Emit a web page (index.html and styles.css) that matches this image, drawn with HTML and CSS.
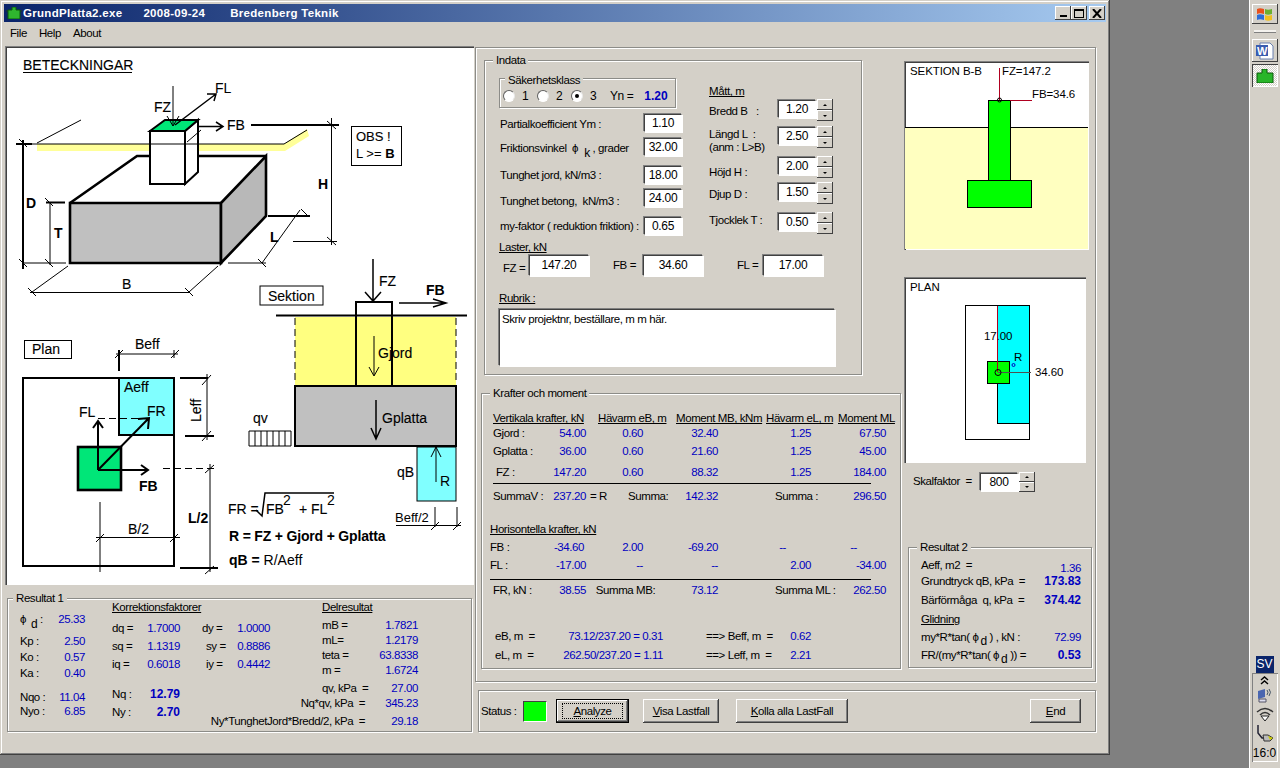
FILE: index.html
```html
<!DOCTYPE html>
<html lang="sv">
<head>
<meta charset="utf-8">
<title>GrundPlatta2.exe</title>
<link rel="stylesheet" href="styles.css">
</head>
<body>
<div class="desktop">
<div class="window">
  <div class="titlebar">
    <svg class="appicon" width="16" height="12" viewBox="0 0 16 12"><path d="M0 4h3M13 4h3" stroke="#1c3c1c" fill="none"/><path d="M6 0h4v3h4v9H2V3h4z" fill="#2fb52f" stroke="#0b5a0b"/></svg>
    <span class="ttext">GrundPlatta2.exe</span><span class="ttext">2008-09-24</span><span class="ttext tlast">Bredenberg Teknik</span>
    <div class="wbtns">
      <div class="wbtn"><i class="wmin"></i></div>
      <div class="wbtn"><i class="wmax"></i></div>
      <div class="wbtn wclose"><svg width="10" height="9" viewBox="0 0 10 9"><path d="M1 0l8 9M9 0L1 9" stroke="#000" stroke-width="2" fill="none"/></svg></div>
    </div>
  </div>
  <div class="menubar"><span>File</span><span>Help</span><span>About</span></div>
  <div class="client">
    <div class="leftcol">
      <div class="drawing">
        <svg width="469" height="539" viewBox="5 46 469 539" class="dsvg">
          <text x="23" y="70" class="sb tx big">BETECKNINGAR</text><path d="M23 72.5H132" class="s1"/>
          <!-- yellow ground band -->
          <path d="M37 144H284L307 129L309 136L285 151H37Z" fill="#ffff99"/>
          <path d="M16 144H284L307 130M37 143L81 120" class="s1"/>
          <path d="M16 144H32" class="s2"/>
          <path d="M23 140V269" class="s2"/>
          <path d="M19 139l8 8M19 259l8 8M45 198l8 8M45 259l8 8" class="s1"/>
          <path d="M23 263H66M50 202V265M46 202.5H65" class="s1"/>
          <path d="M46 202.5H65" class="s2"/>
          <!-- block -->
          <path d="M70 203H221V263H70Z" fill="#c0c0c0" class="s3"/>
          <path d="M221 203L266 156V216L221 263Z" fill="#b8b8b8" class="s3"/>
          <path d="M70 203L137 156H150M198 156H266" class="s3n"/>
          <!-- column -->
          <path d="M150 131H185V184H150Z" fill="#fff" class="s2"/>
          <path d="M185 131L198 120V172L185 184Z" fill="#fff" class="s2"/>
          <path d="M150 131L165 120H198L185 131Z" fill="#00e678" class="s2"/>
          <path d="M150 144H198M187 142L201 130" class="s1"/>
          <!-- arrows -->
          <path d="M173 86V126M167 116L173 126L179 116" class="s1"/>
          <path d="M175 125L216 94M207 94L216 94L214 101" class="s15"/>
          <path d="M198 126.5H223M216 122L223 126.5L216 131" class="s15"/>
          <text x="154" y="112" class="tx sb">FZ</text>
          <text x="215" y="93" class="tx">FL</text>
          <text x="227" y="130" class="tx sb">FB</text>
          <path d="M251 125H339" class="s2"/>
          <path d="M331.5 118V245M293 241.5H337M327 121l9 8M327 237l9 8" class="s1"/>
          <text x="318" y="189" class="tx bd">H</text>
          <rect x="351.500" y="126.500" width="50" height="39" fill="#fff" class="s1"/>
          <text x="356" y="141" class="tx sb small13">OBS !</text>
          <text x="356" y="158" class="tx small13">L &gt;= <tspan class="bd">B</tspan></text>
          <text x="26" y="208" class="tx bd">D</text>
          <text x="54" y="238" class="tx bd">T</text>
          <text x="270" y="242" class="tx bd">L</text>
          <path d="M262 263L300 210M268 216H310" class="s1"/>
          <path d="M268 216H310" class="s2"/>
          <path d="M228 263H266M258 259l8 8M301 209l8 8" class="s1"/>
          <text x="122" y="289" class="tx sb">B</text>
          <path d="M30 292.500H190M32 292L68 266M189 292L218 266M28 288l8 8M185 288l8 8" class="s1"/>
          <!-- Sektion -->
          <rect x="260" y="286" width="63" height="19" fill="#fff" class="s1"/>
          <text x="268" y="301" class="tx sb">Sektion</text>
          <rect x="295" y="317" width="161" height="69" fill="#ffff80"/>
          <path d="M295 318V384M456 318V384" class="dash"/>
          <path d="M276 315.500H467" class="s2"/>
          <path d="M356 385V302H392V385" class="s2" fill="none"/>
          <path d="M373 259V301M365 292L373 301L381 292" class="s15"/>
          <text x="379" y="286" class="tx sb">FZ</text>
          <text x="426" y="295" class="tx bd">FB</text>
          <path d="M399 303H446M433 299L446 303L433 307" class="s15"/>
          <path d="M374 336V375M369 367L374 376L379 367" class="s1"/>
          <text x="378" y="358" class="tx sb">Gjord</text>
          <rect x="295" y="386" width="161" height="60" fill="#c0c0c0" class="s2"/>
          <path d="M376 400V438M371 428L376 439L381 428" class="s15"/>
          <text x="382" y="423" class="tx sb">Gplatta</text>
          <text x="253" y="423" class="tx sb">qv</text>
          <path d="M249 431H291V446H249ZM255 431V446M261 431V446M267 431V446M273 431V446M279 431V446M285 431V446" class="s1" fill="#fff"/>
          <rect x="417" y="447" width="39" height="54" fill="#80ffff" class="s1"/>
          <path d="M436 482V447M431 457L436 447L441 457" class="s1"/>
          <text x="440" y="486" class="tx">R</text>
          <text x="397" y="477" class="tx sb">qB</text>
          <text x="395" y="522" class="tx small13">Beff/2</text>
          <path d="M396 525.500H461M435 507V527M457 507V527M431 530l8-8M453 530l8-8" class="s1"/>
          <!-- Plan -->
          <rect x="24.500" y="340.500" width="47" height="18" fill="#fff" class="s1"/>
          <text x="32" y="354" class="tx sb">Plan</text>
          <text x="135" y="349" class="tx sb">Beff</text>
          <path d="M116 354H178M115 358l8-8M171 358l8-8M174 350V358" class="s1"/>
          <path d="M119 350V371" class="s2"/>
          <rect x="23" y="378" width="151" height="188" fill="#fff" class="s2"/>
          <rect x="119" y="378" width="55" height="57" fill="#80ffff" class="s2"/>
          <text x="124" y="392" class="tx sb">Aeff</text>
          <text x="147" y="416" class="tx sb">FR</text>
          <text x="79" y="417" class="tx sb">FL</text>
          <rect x="78" y="447" width="43" height="43" fill="#00e678" class="s3"/>
          <path d="M98 470L149 418M138 419L149 418L148 429M98 470V421M93 428L98 421L103 428M98 470H148M141 465L148 470L141 475" class="s2"/>
          <path d="M98 418.500H148" class="dash"/>
          <text x="139" y="491" class="tx bd">FB</text>
          <text transform="translate(201 422) rotate(-90)" class="tx sb">Leff</text>
          <path d="M207 374V440M202 385l9-10M202 441l9-10" class="s1"/>
          <path d="M180 378H208M185 436H214" class="s2"/>
          <text x="188" y="523" class="tx bd">L/2</text>
          <path d="M163 468.500H215" class="dash"/>
          <path d="M210 464V572M205 473l9-8M205 574l9-8" class="s1"/>
          <path d="M180 568H218" class="s2"/>
          <text x="128" y="534" class="tx sb">B/2</text>
          <path d="M96 537.500H180M100 502V572M96 542l8-8M170 542l8-8" class="s1"/>
          <!-- formulas -->
          <text x="228" y="514" class="tx sb">FR =</text>
          <path d="M256 510L262 516L265 493H334" class="s15"/>
          <text x="266" y="514" class="tx sb">FB</text>
          <text x="283" y="505" class="tx">2</text>
          <text x="299" y="514" class="tx sb">+ FL</text>
          <text x="327" y="505" class="tx">2</text>
          <text x="229" y="541" class="tx bd tight">R = FZ + Gjord + Gplatta</text>
          <text x="229" y="565" class="tx"><tspan class="bd">qB =</tspan> R/Aeff</text>
        </svg>
      </div>
      <div class="frame res1">
        <div class="legend leg1">Resultat 1</div>
        <div class="r1body">
          <div class="r1a">
            <div class="lv"><span>&#981;<sub class="subd">d</sub> :</span><b class="v">25.33</b></div>
            <div class="lv"><span>Kp :</span><b class="v">2.50</b></div>
            <div class="lv"><span>Ko :</span><b class="v">0.57</b></div>
            <div class="lv"><span>Ka :</span><b class="v">0.40</b></div>
            <div class="lv"><span>Nqo :</span><b class="v">11.04</b></div>
            <div class="lv"><span>Nyo :</span><b class="v">6.85</b></div>
          </div>
          <div class="r1b">
            <div class="u span2">Korrektionsfaktorer</div>
            <div class="lv"><span>dq =</span><b class="v">1.7000</b></div><div class="lv p22"><span>dy =</span><b class="v">1.0000</b></div>
            <div class="lv"><span>sq =</span><b class="v">1.1319</b></div><div class="lv p26"><span>sy =</span><b class="v">0.8886</b></div>
            <div class="lv"><span>iq =</span><b class="v">0.6018</b></div><div class="lv p26"><span>iy =</span><b class="v">0.4442</b></div>
            <div class="lv"><span>Nq :</span><b class="v strong">12.79</b></div><div></div>
            <div class="lv"><span>Ny :</span><b class="v strong">2.70</b></div><div></div>
          </div>
          <div class="r1c">
            <div class="u span2">Delresultat</div>
            <div>mB =</div><b class="v ra">1.7821</b>
            <div>mL=</div><b class="v ra">1.2179</b>
            <div>teta =</div><b class="v ra">63.8338</b>
            <div>m =</div><b class="v ra">1.6724</b>
            <div class="nw">qv, kPa &nbsp;=</div><b class="v ra">27.00</b>
            <div class="lab-end">Nq*qv, kPa &nbsp;=</div><b class="v ra">345.23</b>
            <div class="lab-end">Ny*TunghetJord*Bredd/2, kPa &nbsp;=</div><b class="v ra">29.18</b>
          </div>
        </div>
      </div>
    </div>
    <div class="rightcol">
      <div class="frame mainframe">
        <div class="mleft">
          <div class="frame indata">
            <div class="legend">Indata</div>
            <div class="indbody">
              <div class="indl">
                <div class="frame klass">
                  <div class="legend leg2">Säkerhetsklass</div>
                  <div class="radios">
                    <i class="radio"></i><span class="rl">1</span>
                    <i class="radio"></i><span class="rl">2</span>
                    <i class="radio on"></i><span class="rl">3</span>
                    <span class="yn">Yn =</span><b class="v strong ynv">1.20</b>
                  </div>
                </div>
                <div class="lrow h24 first"><span class="m3">Partialkoefficient Ym :</span><div class="field f38">1.10</div></div>
                <div class="lrow h28"><span class="m3">Friktionsvinkel &nbsp;&#981;<sub class="subk">k</sub> , grader</span><div class="field f38">32.00</div></div>
                <div class="lrow h23"><span class="m2">Tunghet jord, kN/m3 :</span><div class="field f38">18.00</div></div>
                <div class="lrow h28"><span class="m5">Tunghet betong, &nbsp;kN/m3 :</span><div class="field f38">24.00</div></div>
                <div class="lrow h22"><span class="m2">my-faktor ( reduktion friktion) :</span><div class="field f38">0.65</div></div>
              </div>
              <div class="indr">
                <div class="u matt">Mått, m</div>
                <div class="rrow h27"><span class="rlab m5">Bredd B &nbsp;&nbsp;:</span><div class="field f38">1.20</div><div class="spin"><i><s class="up"></s></i><i><s class="dn"></s></i></div></div>
                <div class="rrow h30"><span class="rlab m1">Längd L &nbsp;:<br>(anm : L&gt;B)</span><div class="field f38">2.50</div><div class="spin"><i><s class="up"></s></i><i><s class="dn"></s></i></div></div>
                <div class="rrow h26"><span class="rlab m9">Höjd H :</span><div class="field f38">2.00</div><div class="spin"><i><s class="up"></s></i><i><s class="dn"></s></i></div></div>
                <div class="rrow h30"><span class="rlab m5">Djup D :</span><div class="field f38">1.50</div><div class="spin"><i><s class="up"></s></i><i><s class="dn"></s></i></div></div>
                <div class="rrow h22"><span class="rlab m1">Tjocklek T :</span><div class="field f38">0.50</div><div class="spin"><i><s class="up"></s></i><i><s class="dn"></s></i></div></div>
              </div>
            </div>
            <div class="u laster">Laster, kN</div>
            <div class="lastrow">
              <span class="lfz">FZ =</span><div class="field fw">147.20</div>
              <span class="lfb">FB =</span><div class="field fw">34.60</div>
              <span class="lfl">FL =</span><div class="field fw">17.00</div>
            </div>
            <div class="u rubrik">Rubrik :</div>
            <div class="tarea">Skriv projektnr, beställare, m m här.</div>
          </div>
          <div class="frame krafter">
            <div class="legend">Krafter och moment</div>
            <div class="ktable">
              <div class="u h1">Vertikala krafter, kN</div><div class="u h2">Hävarm eB, m</div><div class="u h3">Moment MB, kNm</div><div class="u h4">Hävarm eL, m</div><div class="u h5">Moment ML</div>
              <div class="lv pl3"><span>Gjord :</span><b class="v">54.00</b></div><b class="v ra">0.60</b><b class="v ra">32.40</b><b class="v ra">1.25</b><b class="v ra">67.50</b>
              <div class="lv pl3"><span>Gplatta :</span><b class="v">36.00</b></div><b class="v ra">0.60</b><b class="v ra">21.60</b><b class="v ra">1.25</b><b class="v ra">45.00</b>
              <div class="lv pl6"><span>FZ :</span><b class="v">147.20</b></div><b class="v ra">0.60</b><b class="v ra">88.32</b><b class="v ra">1.25</b><b class="v ra">184.00</b>
              <div class="rule rl3"></div>
              <div class="lv pl3"><span>SummaV :</span><b class="v">237.20</b></div>
              <div class="sumspan"><span class="eqr">= R</span><span class="sml">Summa:</span><b class="v">142.32</b></div>
              <div class="pl57 nw">Summa :</div><b class="v ra">296.50</b>
              <div class="u hz">Horisontella krafter, kN</div>
              <div class="lv"><span>FB :</span><b class="v pr2">-34.60</b></div><b class="v ra">2.00</b><b class="v ra">-69.20</b><b class="v ra pr25">--</b><b class="v ra pr29">--</b>
              <div class="lv"><span>FL :</span><b class="v">-17.00</b></div><b class="v ra">--</b><b class="v ra">--</b><b class="v ra">2.00</b><b class="v ra">-34.00</b>
              <div class="rule"></div>
              <div class="lv pl3"><span>FR, kN :</span><b class="v">38.55</b></div>
              <div class="sumspan"><span class="sm2">Summa MB:</span><b class="v">73.12</b></div>
              <div class="pl57 nw">Summa ML :</div><b class="v ra">262.50</b>
              <div class="eqrow"><div class="lv pl5"><span>eB, m &nbsp;=</span><b class="v">73.12/237.20 = 0.31</b></div><div class="lv arrow"><span>==&gt; Beff, m &nbsp;=</span><b class="v">0.62</b></div></div>
              <div class="eqrow"><div class="lv pl5"><span>eL, m &nbsp;=</span><b class="v">262.50/237.20 = 1.11</b></div><div class="lv arrow"><span>==&gt; Leff, m &nbsp;=</span><b class="v">2.21</b></div></div>
            </div>
          </div>
        </div>
        <div class="mright">
          <div class="pic secpic">
            <svg width="183" height="187" viewBox="905 62 183 187">
              <rect x="905" y="127" width="183" height="122" fill="#ffffc0"/>
              <path d="M905 127.500H1088" class="s1" />
              <rect x="988.500" y="100.500" width="22" height="80" fill="#00ff00" class="s1"/>
              <rect x="967.500" y="180.500" width="64" height="27" fill="#00ff00" class="s1"/>
              <path d="M999.500 68V100M1010 100.500H1032" class="red"/>
              <circle cx="999.500" cy="100" r="2" fill="none" class="s1"/>
              <text x="910" y="75" class="ptx">SEKTION B-B</text>
              <text x="1002" y="75" class="ptx">FZ=147.2</text>
              <text x="1032" y="98" class="ptx">FB=34.6</text>
            </svg>
          </div>
          <div class="pic planpic">
            <svg width="180" height="184" viewBox="905 278 180 184">
              <rect x="965.500" y="305.500" width="64" height="134" fill="#fff" class="s1"/>
              <rect x="997.500" y="305.500" width="32" height="118" fill="#00ffff" class="s1"/>
              <rect x="987.500" y="361.500" width="22" height="22" fill="#00ff00" class="s1"/>
              <path d="M997.500 306V372" class="red"/>
              <path d="M998 372.500H1031" class="grey"/>
              <circle cx="998" cy="372.500" r="3" fill="none" class="s1"/>
              <circle cx="1013.500" cy="365" r="1.500" fill="none" stroke="#0000c0"/>
              <text x="910" y="291" class="ptx">PLAN</text>
              <text x="984" y="340" class="ptx">17.00</text>
              <text x="1014" y="361" class="ptx">R</text>
              <text x="1035" y="376" class="ptx">34.60</text>
            </svg>
          </div>
          <div class="skal">
            <span class="skl">Skalfaktor &nbsp;=</span><div class="field f38">800</div><div class="spin spin-s"><i><s class="up"></s></i><i><s class="dn"></s></i></div>
          </div>
          <div class="frame res2">
            <div class="legend">Resultat 2</div>
            <div class="r2grid">
              <div class="lv"><span>Aeff, m2 &nbsp;=</span><b class="v pt3">1.36</b></div>
              <div class="lv"><span>Grundtryck qB, kPa &nbsp;=</span><b class="v strong">173.83</b></div>
              <div class="lv"><span>Bärförmåga &nbsp;q, kPa &nbsp;=</span><b class="v strong">374.42</b></div>
              <div class="u fit">Glidning</div>
              <div class="lv"><span>my*R*tan( &#981;<sub class="subd2">d</sub> ) , kN :</span><b class="v">72.99</b></div>
              <div class="lv"><span>FR/(my*R*tan( &#981;<sub class="subd2">d</sub> )) =</span><b class="v strong">0.53</b></div>
            </div>
          </div>
        </div>
      </div>
      <div class="frame status">
        <span class="stl">Status :</span>
        <div class="lamp"></div>
        <div class="btn default"><span class="focus"><u>A</u>nalyze</span></div>
        <div class="btn bvisa"><span><u>V</u>isa Lastfall</span></div>
        <div class="btn bkolla"><span><u>K</u>olla alla LastFall</span></div>
        <div class="btn bend"><span><u>E</u>nd</span></div>
      </div>
    </div>
  </div>
</div>
<div class="taskbar">
  <div class="tbtn startb">
    <svg width="17" height="15" viewBox="0 0 17 15"><path d="M1 2c2-1 4-1 7 0v5C5 6 3 6 1 7z" fill="#e8501c"/><path d="M9 2c2 1 4 1 7 0v5c-3 1-5 1-7 0z" fill="#6cb030"/><path d="M1 8c2-1 4-1 7 0v5c-3-1-5-1-7 0z" fill="#2c6cd8"/><path d="M9 8c2 1 4 1 7 0v5c-3 1-5 1-7 0z" fill="#f0c020"/></svg>
  </div>
  <div class="tsep"></div>
  <div class="tbtn wordb">
    <svg width="20" height="18" viewBox="0 0 20 18"><path d="M5 1h10l3 3v13H5z" fill="#fff" stroke="#6a80b0"/><rect x="1" y="3" width="12" height="11" fill="#3a5cb0"/><text x="2" y="13" class="wordw">W</text></svg>
  </div>
  <div class="tbtn appb">
    <svg width="18" height="14" viewBox="0 0 18 14"><path d="M6 0h5v4h6v10H1V4h5z" fill="#29b529" stroke="#0b5a0b"/></svg>
  </div>
  <div class="tspacer"></div>
  <div class="lang">SV</div>
  <div class="tray">
    <svg class="chev" width="9" height="9" viewBox="0 0 9 9"><path d="M1 4l3.500-3L8 4M1 8l3.500-3L8 8" fill="none" stroke="#000" stroke-width="1.400"/></svg>
    <svg width="18" height="17" viewBox="0 0 18 17"><path d="M2 4l7-2v8l-7 2z" fill="#4a66b0"/><path d="M3 12h7v3H3z" fill="#dde" stroke="#556"/><path d="M11 3q2 2 0 5M13 2q3 3 0 7" fill="none" stroke="#456"/></svg>
    <svg width="18" height="16" viewBox="0 0 18 16"><path d="M1 6q8-7 16 0M4 9q5-5 10 0" fill="none" stroke="#333" stroke-width="1.500"/><path d="M9 15L5 10h8z" fill="#fff" stroke="#222"/></svg>
    <svg width="20" height="18" viewBox="0 0 20 18"><path d="M3 1v8l4 5h4" fill="none" stroke="#223" stroke-width="1.500"/><path d="M8 11h5l5 3-3 3H9z" fill="#bbb" stroke="#333"/><path d="M13 12l5 2-3 2z" fill="#cc0"/></svg>
    <div class="clock">16:0</div>
  </div>
</div>
</div>
</body>
</html>
```
FILE: styles.css
```css
* { box-sizing: border-box; }
html, body { margin: 0; padding: 0; }
body {
  background: #808080;
  font: 11.5px/14px "Liberation Sans", Arial, sans-serif;
  letter-spacing: -0.42px;
  color: #000;
  overflow: hidden;
}
.desktop { display: flex; justify-content: space-between; width: 1280px; height: 768px; }

/* window chrome */
.window {
  width: 1110px; height: 755px; padding: 4px;
  background: #d4d0c8;
  box-shadow: inset -1px -1px #404040, inset 1px 1px #d4d0c8, inset -2px -2px #808080, inset 2px 2px #fff;
}
.titlebar {
  height: 18px; display: flex; align-items: center; gap: 21px; padding-left: 2px;
  background: linear-gradient(90deg, #0a246a, #a6caf0);
  color: #fff;
}
.ttext { font-size: 11.5px; font-weight: bold; letter-spacing: 0.3px; }
.tlast { margin-left: 4px; }
.appicon { margin-right: -20px; }
.wbtns { margin-left: auto; display: flex; gap: 0; padding-right: 1px; }
.wbtn {
  width: 16px; height: 14px; background: #d4d0c8; display: flex; align-items: center; justify-content: center;
  box-shadow: inset -1px -1px #404040, inset 1px 1px #fff;
}
.wclose { margin-left: 2px; }
.wmin { display: block; width: 7px; height: 2px; background: #000; margin-top: 6px; }
.wmax { display: block; width: 10px; height: 9px; border: 1px solid #000; border-top-width: 2px; }
.menubar { height: 21px; margin-bottom: 2px; display: flex; align-items: center; padding-left: 6px; gap: 12px; font-size: 11.5px; letter-spacing: -0.4px; }
.client { display: flex; margin-left: 1px; }

/* left column */
.leftcol { width: 469px; margin-top: 1px; }
.drawing {
  width: 469px; height: 539px; background: #fff;
  box-shadow: inset 1px 1px #808080, inset 2px 2px #404040, inset -1px -1px #fff;
}
.dsvg { display: block; }
.frame { border: 1px solid #8c8c88; box-shadow: 1px 1px 0 #fff, inset 1px 1px 0 #fff; }
.legend {
  width: fit-content; height: 14px; margin: -8px 0 0 8px; padding: 0 3px;
  background: #d4d0c8;
}
.leg1 { margin-left: 5px; }
.res1 { width: 465px; height: 134px; margin: 13px 0 0 2px; }
.r1body { display: flex; margin-top: -7px; }
.lv { display: flex; justify-content: space-between; white-space: nowrap; }
.v { font-weight: normal; color: #0000c0; white-space: nowrap; }
.strong { font-weight: bold; font-size: 12px; letter-spacing: 0; }
.ra { text-align: right; }
.u { text-decoration: underline; white-space: nowrap; }
.nw { white-space: nowrap; }
.span2 { grid-column: 1 / -1; }
.r1a {
  width: 65px; margin: 14px 0 0 12px; display: grid;
  grid-template-rows: 22px 16px 16px 24px 14px 14px;
}
.subd { font-size: 12px; vertical-align: -5px; line-height: 0; margin-left: 5px; }
.r1b {
  width: 158px; margin: 2px 0 0 27px; display: grid;
  grid-template-columns: 68px 90px;
  grid-template-rows: 21px 18px 18px 30px 18px 14px;
}
.p22 { padding-left: 22px; }
.p26 { padding-left: 26px; }
.r1c {
  width: 96px; margin: 2px 0 0 52px; display: grid;
  grid-template-columns: 43px 53px;
  grid-template-rows: 18px 15px 15px 15px 18px 15px 18px 14px;
}
.lab-end { display: flex; justify-content: flex-end; white-space: nowrap; }

/* right column */
.rightcol { margin: 2px 0 0 1px; width: 621px; }
.mainframe { height: 635px; display: flex; padding-left: 5px; }
.mleft { width: 420px; }
.indata { width: 378px; height: 315px; margin: 12px 0 0 3px; }
.indbody { display: flex; }
.indl { width: 183px; margin-left: 14px; }
.klass { width: 177px; height: 30px; margin-top: 11px; }
.leg2 { margin: -6px 0 0 5px; }
.radios { display: flex; align-items: center; height: 22px; margin-top: -2px; padding-left: 3px; font-size: 12px; }
.radio {
  display: block; position: relative; width: 12px; height: 12px; border-radius: 50%;
  background: #fff; border: 1px solid; border-color: #606060 #e8e8e8 #fff #606060;
}
.on::after {
  content: ""; position: absolute; left: 3px; top: 3px; width: 4px; height: 4px;
  border-radius: 50%; background: #000;
}
.rl { width: 22px; padding-left: 7px; }
.yn { margin-left: 5px; }
.ynv { margin-left: 11px; }
.lrow { display: flex; justify-content: space-between; padding-left: 1px; white-space: nowrap; }
.first { margin-top: 6px; }
.m1 { margin-top: 1px; }
.m2 { margin-top: 2px; }
.m3 { margin-top: 3px; }
.m5 { margin-top: 5px; }
.m9 { margin-top: 9px; }
.h22 { height: 22px; }
.h23 { height: 23px; }
.h24 { height: 24px; }
.h26 { height: 26px; }
.h27 { height: 27px; }
.h28 { height: 28px; }
.h30 { height: 30px; }
.subk { font-size: 12px; vertical-align: -5px; line-height: 0; margin-left: 6px; }
.field {
  background: #fff; text-align: center; height: 18px; line-height: 16px; font-size: 12px; letter-spacing: -0.3px;
  border: 1px solid; border-color: #404040 #fff #fff #404040;
  box-shadow: -1px -1px 0 #808080, 1px 1px 0 #fff;
}
.f38 { width: 38px; flex: none; margin-left: auto; }
.indr { margin-left: 27px; width: 125px; }
.matt { margin-top: 17px; height: 16px; }
.rrow { display: flex; align-items: flex-start; }
.rlab { width: 69px; white-space: nowrap; line-height: 13px; flex: none; }
.rrow .f38 { margin-left: 0; }
.spin { width: 16px; height: 22px; margin: -1px 0 0 1px; display: flex; flex-direction: column; flex: none; }
.spin i {
  height: 11px; background: #d4d0c8; display: flex; align-items: center; justify-content: center;
  box-shadow: inset -1px -1px #404040, inset 1px 1px #fff;
}
.up { width: 0; height: 0; border: 2px solid transparent; border-top: 0; border-bottom: 2px solid #000; }
.dn { width: 0; height: 0; border: 2px solid transparent; border-bottom: 0; border-top: 2px solid #000; }
.laster { margin: 1px 0 0 14px; height: 14px; }
.lastrow {
  display: grid; margin: 1px 0 0 14px; width: 324px;
  grid-template-columns: 30px 60px 54px 60px 60px 60px; align-items: start;
}
.fw { width: 60px; height: 21px; line-height: 18px; }
.lfz { padding: 6px 0 0 4px; }
.lfb { padding: 3px 0 0 24px; }
.lfl { padding: 3px 0 0 34px; }
.rubrik { margin: 15px 0 0 14px; height: 14px; }
.tarea {
  margin: 4px 0 0 14px; width: 336px; height: 57px; background: #fff; padding: 2px 2px;
  border: 1px solid; border-color: #404040 #fff #fff #404040;
  box-shadow: -1px -1px 0 #808080, 1px 1px 0 #fff;
}
.krafter { width: 420px; height: 276px; margin-top: 18px; }
.ktable {
  margin: 11px 0 0 8px; display: grid;
  grid-template-columns: 96px 57px 75px 93px 75px;
  grid-template-rows: 15px 18px 21px 18px 6px 33px 18px 18px 21px 4px 46px 19px 14px;
}
.h1 { padding-left: 3px; }
.h2 { padding-left: 12px; }
.h3 { padding-left: 33px; }
.h4 { padding-left: 48px; }
.h5 { padding-left: 27px; }
.pl3 { padding-left: 3px; }
.pl5 { padding-left: 5px; }
.pl6 { padding-left: 6px; }
.pl57 { padding-left: 57px; }
.rule { grid-column: 1 / -1; height: 1px; background: #000; margin-right: 15px; }
.rl3 { margin-left: 3px; }
.sumspan { grid-column: 2 / 4; display: flex; align-items: flex-start; justify-content: flex-end; }
.eqr { margin-right: auto; padding-left: 4px; }
.sml { margin-right: 17px; }
.sm2 { margin-right: 36px; }
.pr2 { padding-right: 2px; }
.pr25 { padding-right: 25px; }
.pr29 { padding-right: 29px; }
.hz { grid-column: 1 / -1; }
.eqrow { grid-column: 1 / -1; display: flex; }
.eqrow > :first-child { width: 173px; }
.arrow { width: 105px; margin-left: 43px; }
.mright { width: 188px; margin: 13px 0 0 3px; }
.pic {
  background: #fff;
  box-shadow: inset 1px 1px #808080, inset 2px 2px #404040, inset -1px -1px #fff;
  padding: 1px 0 0 1px;
}
.pic svg { display: block; }
.secpic { width: 185px; height: 189px; }
.planpic { width: 182px; height: 186px; margin-top: 27px; }
.skal { display: flex; height: 19px; margin-top: 9px; padding-left: 9px; align-items: flex-start; }
.skl { width: 67px; padding-top: 2px; white-space: nowrap; flex: none; }
.skal .field { margin: 1px 0 0; }
.spin-s { height: 20px; margin: 0 0 0 1px; }
.spin-s i { height: 10px; }
.res2 { width: 184px; height: 121px; margin: 56px 0 0 4px; }
.r2grid {
  margin: 4px 0 0 12px; width: 160px; display: grid;
  grid-template-rows: 16px 19px 19px 18px 18px 14px;
}
.pt3 { padding-top: 3px; }
.fit { width: fit-content; }
.subd2 { font-size: 12px; vertical-align: -4px; line-height: 0; margin-left: 2px; }
.status { width: 618px; height: 42px; margin: 8px 0 0 3px; display: flex; align-items: center; padding-left: 2px; }
.stl { width: 42px; }
.lamp {
  width: 24px; height: 21px; background: #00ff00; flex: none;
  border: 1px solid; border-color: #404040 #fff #fff #404040;
}
.btn {
  height: 24px; background: #d4d0c8; display: flex; align-items: center; justify-content: center; flex: none;
  box-shadow: inset -1px -1px #404040, inset 1px 1px #fff, inset -2px -2px #808080;
  letter-spacing: -0.4px;
}
.default {
  width: 73px; margin-left: 9px; border: 1px solid #000;
  box-shadow: inset -1px -1px #404040, inset 1px 1px #fff, inset -2px -2px #808080;
}
.focus { border: 1px dotted #000; width: 61px; height: 16px; text-align: center; line-height: 14px; }
.bvisa { width: 76px; margin-left: 14px; }
.bkolla { width: 112px; margin-left: 17px; }
.bend { width: 51px; margin-left: auto; margin-right: 14px; }

/* svg drawing helpers */
.s1 { stroke: #000; stroke-width: 1; fill-opacity: 1; }
path.s1:not([fill]) { fill: none; }
.s15 { stroke: #000; stroke-width: 1.5; fill: none; }
.s2 { stroke: #000; stroke-width: 2; }
path.s2:not([fill]) { fill: none; }
.s3 { stroke: #000; stroke-width: 2.6; }
.s3n { stroke: #000; stroke-width: 2.6; fill: none; }
.dash { stroke: #000; stroke-width: 1; stroke-dasharray: 7 4; fill: none; }
.red { stroke: #b00020; stroke-width: 1; fill: none; }
.grey { stroke: #505050; stroke-width: 1; fill: none; }
.tx { font: 14px "Liberation Sans", Arial, sans-serif; letter-spacing: 0; fill: #000; }
.big { font-size: 14px; }
.small13 { font-size: 13px; }
.sb { stroke: #000; stroke-width: 0.12; }
.bd { font-weight: bold; }
.tight { letter-spacing: -0.18px; }
.ptx { font: 11.5px "Liberation Sans", Arial, sans-serif; letter-spacing: -0.1px; fill: #000; }
.wordw { font: bold 11px "Liberation Sans", Arial, sans-serif; fill: #fff; }

/* taskbar */
.taskbar { width: 31px; height: 768px; background: #d4d0c8; display: flex; flex-direction: column; align-items: center; box-shadow: inset 1px 0 #fff; }
.tbtn { display: flex; align-items: center; justify-content: center; flex: none; }
.startb { width: 26px; height: 20px; margin-top: 4px; box-shadow: inset -1px -1px #404040, inset 1px 1px #fff; }
.tsep { width: 22px; height: 3px; margin-top: 6px; background: #f4f2ee; border-bottom: 1px solid #808080; }
.wordb { width: 26px; height: 23px; margin-top: 6px; box-shadow: inset -1px -1px #404040, inset 1px 1px #fff; }
.appb { width: 26px; height: 23px; margin-top: 2px; background: repeating-conic-gradient(#fff 0 25%, #d4d0c8 0 50%) 0 0 / 2px 2px; box-shadow: inset 1px 1px #404040, inset -1px -1px #fff; }
.tspacer { flex: 1; }
.lang { width: 18px; height: 17px; background: #0a246a; color: #fff; text-align: center; line-height: 17px; font-size: 12px; letter-spacing: 0; flex: none; }
.tray {
  width: 26px; height: 89px; margin-bottom: 6px; padding-top: 2px;
  display: flex; flex-direction: column; align-items: center; gap: 2px;
  box-shadow: inset 1px 1px #808080, inset -1px -1px #fff;
}
.chev { margin-top: 1px; }
.clock { font-size: 12px; letter-spacing: 0; margin-top: 2px; overflow: hidden; width: 25px; text-align: center; }
```
